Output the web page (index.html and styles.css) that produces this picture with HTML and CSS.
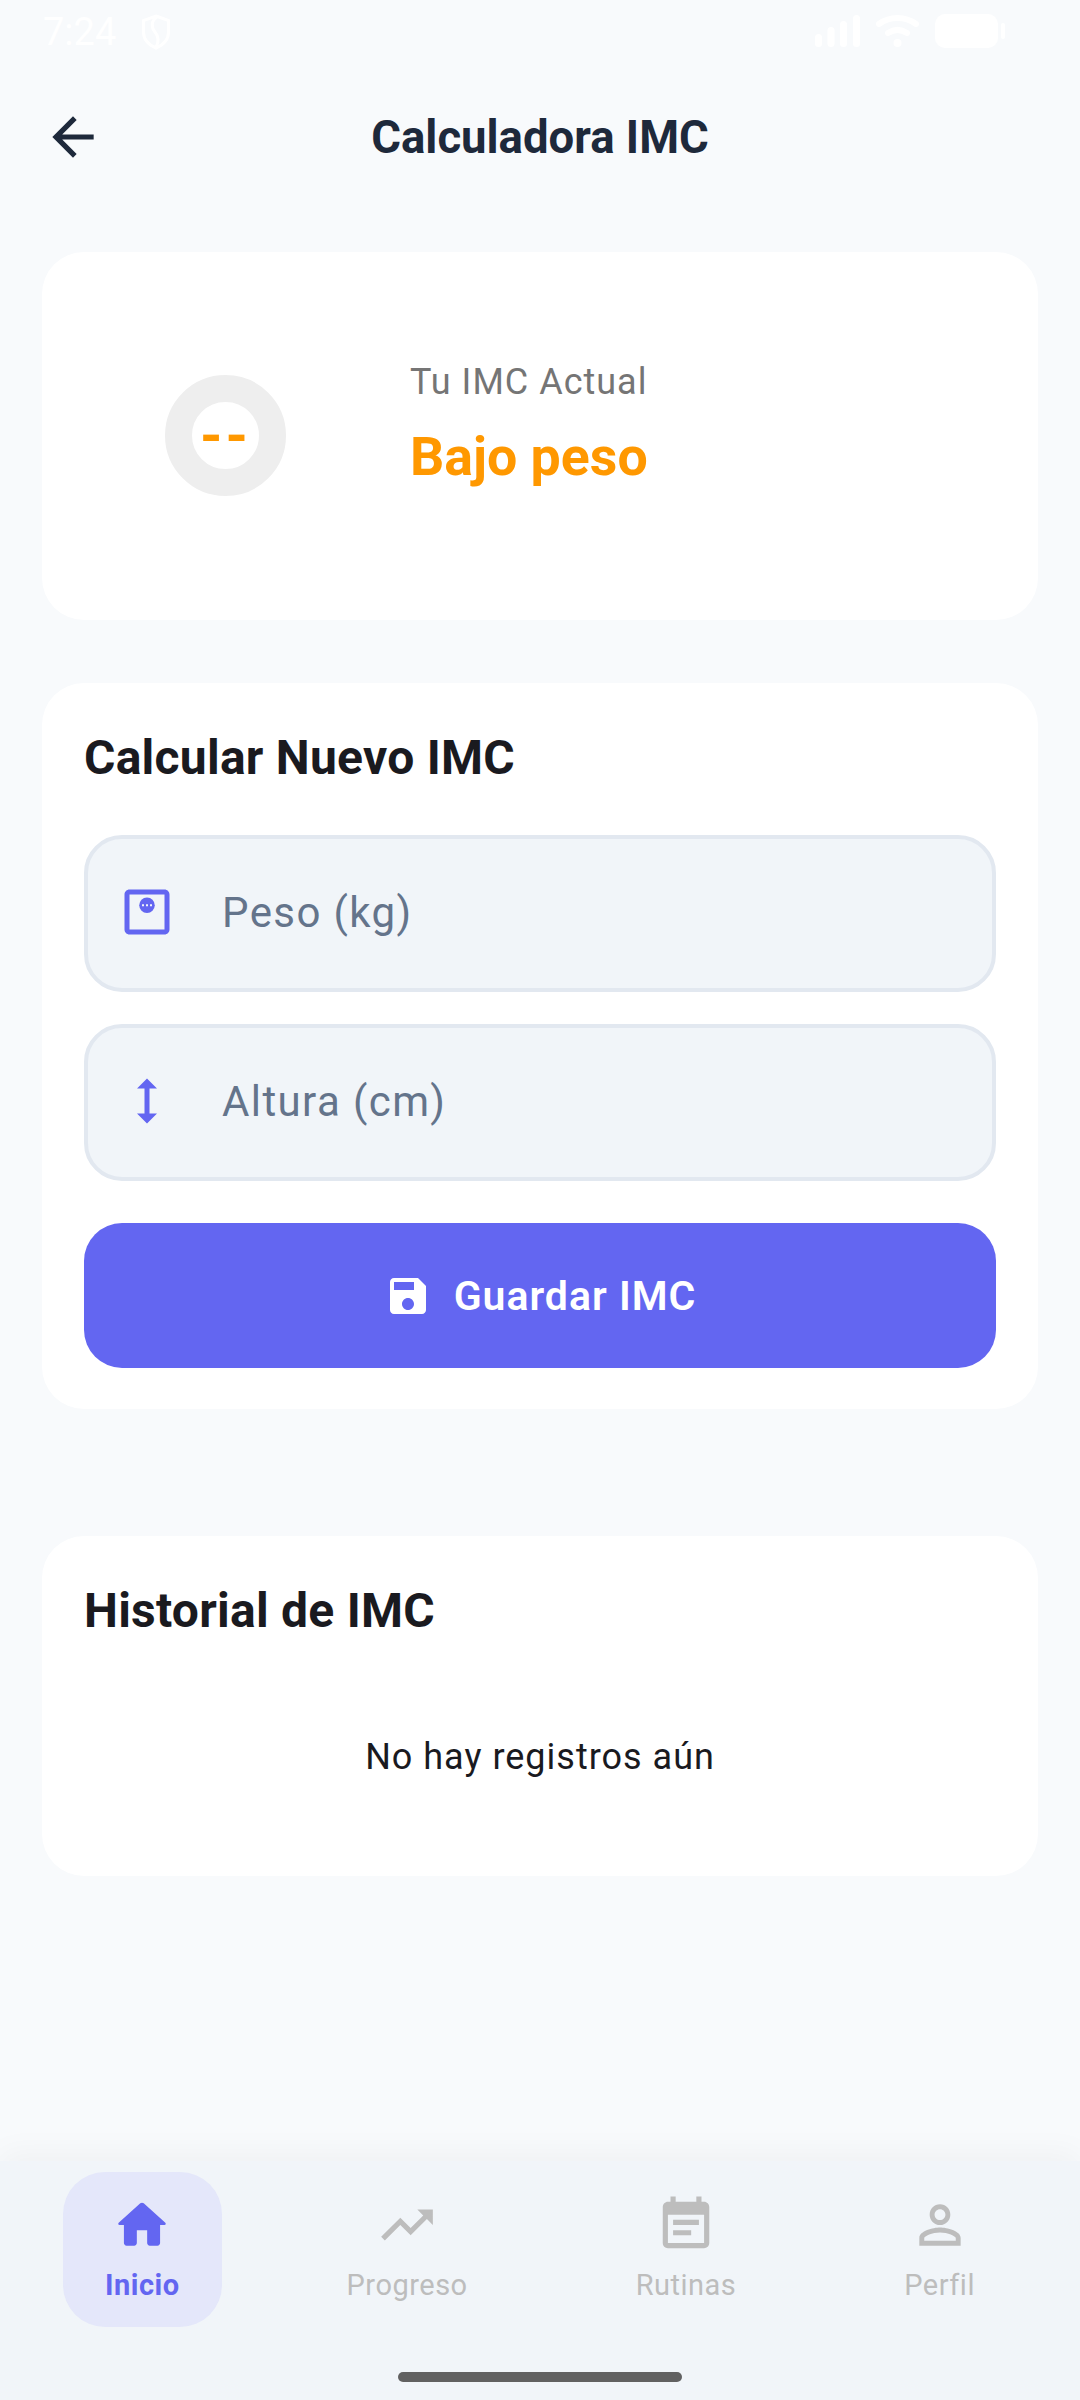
FILE: index.html
```html
<!DOCTYPE html>
<html lang="es">

<head>
    <meta charset="UTF-8">
    <meta name="viewport" content="width=device-width, initial-scale=1.0">
    <title>Calculadora IMC</title>
    <link rel="stylesheet" href="styles.css">
</head>
<body>
    <div class="status-bar">
        <div class="status-left">
            <span class="status-time">7:24</span>
            <svg width="28" height="36" viewBox="0 0 28 36" fill="none" stroke="#fff" stroke-width="3"><path d="M14 2 L26.500 6.500 V18 C26.500 26 21 31 14 34 C7 31 1.500 26 1.500 18 V6.500 Z"/><path d="M15 3 C9 7 9 13 13 18 C17 23 17 28 14 33"/></svg>
        </div>
        <div class="status-right">
            <svg width="45" height="32" viewBox="0 0 45 32" fill="#fff"><rect x="0" y="19" width="7" height="13" rx="3.500"/><rect x="12.500" y="12" width="7" height="20" rx="3.500"/><rect x="25" y="6" width="7" height="26" rx="3.500"/><rect x="38" y="0" width="7" height="32" rx="3.500"/></svg>
            <svg width="43" height="32" viewBox="0 0 43 32" fill="none" stroke="#fff" stroke-width="6" stroke-linecap="round"><path d="M3 9 C14 1 29 1 40 9"/><path d="M12 18 C18 14 25 14 31 18"/><circle cx="21.500" cy="28" r="2" stroke-width="4" fill="#fff"/></svg>
            <div class="battery"><div class="battery-body"></div><div class="battery-tip"></div></div>
        </div>
    </div>

    <header class="app-header">
        <svg width="62" height="62" viewBox="0 0 24 24" fill="#1e293b"><path d="M20 11H7.830l5.590-5.590L12 4l-8 8 8 8 1.410-1.410L7.830 13H20v-2z"/></svg>
        <h1>Calculadora IMC</h1>
    </header>

    <main class="content">
        <section class="card current-card">
            <div class="gauge"><span>--</span></div>
            <div class="current-text">
                <p class="current-label">Tu IMC Actual</p>
                <p class="current-value">Bajo peso</p>
            </div>
        </section>

        <section class="card form-card">
            <h2>Calcular Nuevo IMC</h2>
            <div class="field">
                <svg width="60" height="60" viewBox="0 0 24 24" fill="#6366f1"><path d="M19 5v14H5V5h14m0-2H5c-1.100 0-2 .9-2 2v14c0 1.100.9 2 2 2h14c1.100 0 2-.9 2-2V5c0-1.100-.9-2-2-2z"/><circle cx="12" cy="9.300" r="3.100"/><g fill="#f1f5f9"><rect x="10" y="8.900" width=".8" height=".8"/><rect x="11.600" y="8.900" width=".8" height=".8"/><rect x="13.200" y="8.900" width=".8" height=".8"/></g></svg>
                <span>Peso (kg)</span>
            </div>
            <div class="field">
                <svg width="60" height="60" viewBox="0 0 24 24" fill="#6366f1"><path d="M13 6.990h3L12 3 8 6.990h3v10.020H8L12 21l4-3.990h-3z"/></svg>
                <span>Altura (cm)</span>
            </div>
            <button class="save-btn">
                <svg width="48" height="48" viewBox="0 0 24 24" fill="#fff"><path d="M17 3H5c-1.110 0-2 .9-2 2v14c0 1.100.89 2 2 2h14c1.100 0 2-.9 2-2V7l-4-4zm-5 16c-1.660 0-3-1.340-3-3s1.340-3 3-3 3 1.340 3 3-1.340 3-3 3zm3-10H5V5h10v4z"/></svg>
                Guardar IMC
            </button>
        </section>

        <section class="card history-card">
            <h2>Historial de IMC</h2>
            <p class="empty">No hay registros aún</p>
        </section>
    </main>

    <nav class="bottom-nav">
        <ul>
            <li class="nav-item active">
                <svg width="62" height="62" viewBox="0 0 24 24"><path d="M10 19v-5h4v5c0 .55.45 1 1 1h3c.55 0 1-.45 1-1v-7h1.700c.46 0 .68-.57.33-.87L12.670 3.600c-.38-.34-.96-.34-1.340 0l-8.360 7.530c-.34.3-.13.87.33.87H5v7c0 .55.45 1 1 1h3c.55 0 1-.45 1-1z"/></svg>
                <span>Inicio</span>
            </li>
            <li class="nav-item">
                <svg width="62" height="62" viewBox="0 0 24 24"><path d="M16 6l2.290 2.290-4.880 4.880-4-4L2 16.590 3.410 18l6-6 4 4 6.300-6.290L22 12V6z"/></svg>
                <span>Progreso</span>
            </li>
            <li class="nav-item">
                <svg width="62" height="62" viewBox="0 0 24 24"><path d="M17 10H7v2h10v-2zm2-7h-1V1h-2v2H8V1H6v2H5c-1.110 0-1.990.9-1.990 2L3 19c0 1.100.89 2 2 2h14c1.100 0 2-.9 2-2V5c0-1.100-.9-2-2-2zm0 16H5V8h14v11zm-5-5H7v2h7v-2z"/></svg>
                <span>Rutinas</span>
            </li>
            <li class="nav-item">
                <svg width="62" height="62" viewBox="0 0 24 24"><path d="M12 5.900c1.160 0 2.100.94 2.100 2.100s-.94 2.100-2.100 2.100S9.900 9.160 9.900 8s.94-2.100 2.100-2.100m0 9c2.970 0 6.100 1.460 6.100 2.100v1.100H5.900V17c0-.64 3.130-2.100 6.100-2.100M12 4C9.790 4 8 5.790 8 8s1.790 4 4 4 4-1.790 4-4-1.790-4-4-4zm0 9c-2.670 0-8 1.340-8 4v3h16v-3c0-2.660-5.330-4-8-4z"/></svg>
                <span>Perfil</span>
            </li>
        </ul>
        <div class="home-bar"></div>
    </nav>
</body>

</html>
```

FILE: styles.css
```css
* {
    box-sizing: border-box;
}

body {
    font-family: Roboto, sans-serif;
    margin: 0;
    padding: 0;
    width: 1080px;
    height: 2400px;
    background-color: #f8fafc;
    display: flex;
    flex-direction: column;
    overflow: hidden;
}

p, h1, h2 {
    margin: 0;
}

.status-bar {
    height: 60px;
    padding: 14px 75px 0 43px;
    display: flex;
    justify-content: space-between;
    align-items: flex-start;
}

.status-left {
    display: flex;
    align-items: center;
    gap: 26px;
}

.status-time {
    color: #fff;
    font-size: 38px;
    line-height: 36px;
}

.status-right {
    display: flex;
    align-items: center;
    gap: 16px;
}

.battery {
    display: flex;
    align-items: center;
    gap: 3px;
}

.battery-body {
    width: 63px;
    height: 34px;
    background-color: #fff;
    border-radius: 10px;
}

.battery-tip {
    width: 4px;
    height: 16px;
    background-color: #fff;
    border-radius: 2px;
}

.app-header {
    position: relative;
    height: 154px;
    padding-left: 42px;
    display: flex;
    align-items: center;
}

.app-header h1 {
    position: absolute;
    left: 0;
    right: 0;
    text-align: center;
    font-size: 45.5px;
    font-weight: 700;
    color: #1e293b;
}

.content {
    flex: 1;
    padding: 38px 42px 0;
}

.card {
    background-color: #fff;
    border-radius: 42px;
}

.current-card {
    height: 368px;
    padding-left: 123px;
    display: flex;
    align-items: center;
    gap: 124px;
}

.gauge {
    width: 121px;
    height: 121px;
    margin-bottom: 2px;
    border: 27px solid #eeeeee;
    border-radius: 50%;
    display: flex;
    align-items: center;
    justify-content: center;
    color: #ff9800;
    font-size: 57px;
    font-weight: 700;
    letter-spacing: 3px;
    line-height: 1;
    flex: none;
}

.current-text {
    padding-bottom: 23px;
}

.current-label {
    font-size: 36px;
    color: #757575;
    letter-spacing: 1px;
}

.current-value {
    margin-top: 22px;
    font-size: 53.7px;
    font-weight: 700;
    color: #ff9800;
}

.form-card {
    margin-top: 63px;
    height: 726px;
    padding: 45px 42px 0;
}

.history-card {
    margin-top: 127px;
    height: 340px;
    padding: 45px 42px 0;
}

.card h2 {
    font-size: 48px;
    font-weight: 700;
    letter-spacing: 0.25px;
    line-height: 60px;
    color: #1a1a1f;
}

.field {
    height: 157px;
    margin-top: 32px;
    padding: 0 0 3px 29px;
    background-color: #f1f5f9;
    border: 4px solid #e2e8f0;
    border-radius: 38px;
    display: flex;
    align-items: center;
    gap: 45px;
    color: #64748b;
    font-size: 42px;
    letter-spacing: 1.4px;
}

.form-card h2 + .field {
    margin-top: 47px;
}

.save-btn {
    width: 100%;
    height: 145px;
    margin-top: 42px;
    background-color: #6366f1;
    color: #fff;
    border: none;
    border-radius: 38px;
    font-family: Roboto, sans-serif;
    font-size: 41px;
    font-weight: 600;
    letter-spacing: 1px;
    display: flex;
    align-items: center;
    justify-content: center;
    gap: 22px;
}

.empty {
    margin-top: 95px;
    text-align: center;
    font-size: 36px;
    letter-spacing: 1px;
    color: #1a1a1f;
}

.bottom-nav {
    height: 239px;
    background-color: #f1f5f9;
    box-shadow: 0 -8px 30px rgba(0, 0, 0, 0.04);
    padding-top: 11px;
    display: flex;
    flex-direction: column;
}

.bottom-nav ul {
    list-style: none;
    margin: 0;
    padding: 0 62px 0 63px;
    display: flex;
    justify-content: space-between;
}

.nav-item {
    height: 155px;
    padding: 22px 43px 0;
    border-radius: 42px;
    display: flex;
    flex-direction: column;
    align-items: center;
    color: #bdbdbd;
    fill: #bdbdbd;
    font-size: 29px;
    letter-spacing: 0.5px;
}

.nav-item span {
    line-height: 36px;
    margin-top: 11px;
}

.nav-item.active {
    padding: 22px 42px 0;
    background-color: #e4e7fa;
    color: #6366f1;
    fill: #6366f1;
    font-weight: 700;
}

.home-bar {
    width: 284px;
    height: 10px;
    margin: 45px auto 0;
    background-color: #616161;
    border-radius: 5px;
}
```
